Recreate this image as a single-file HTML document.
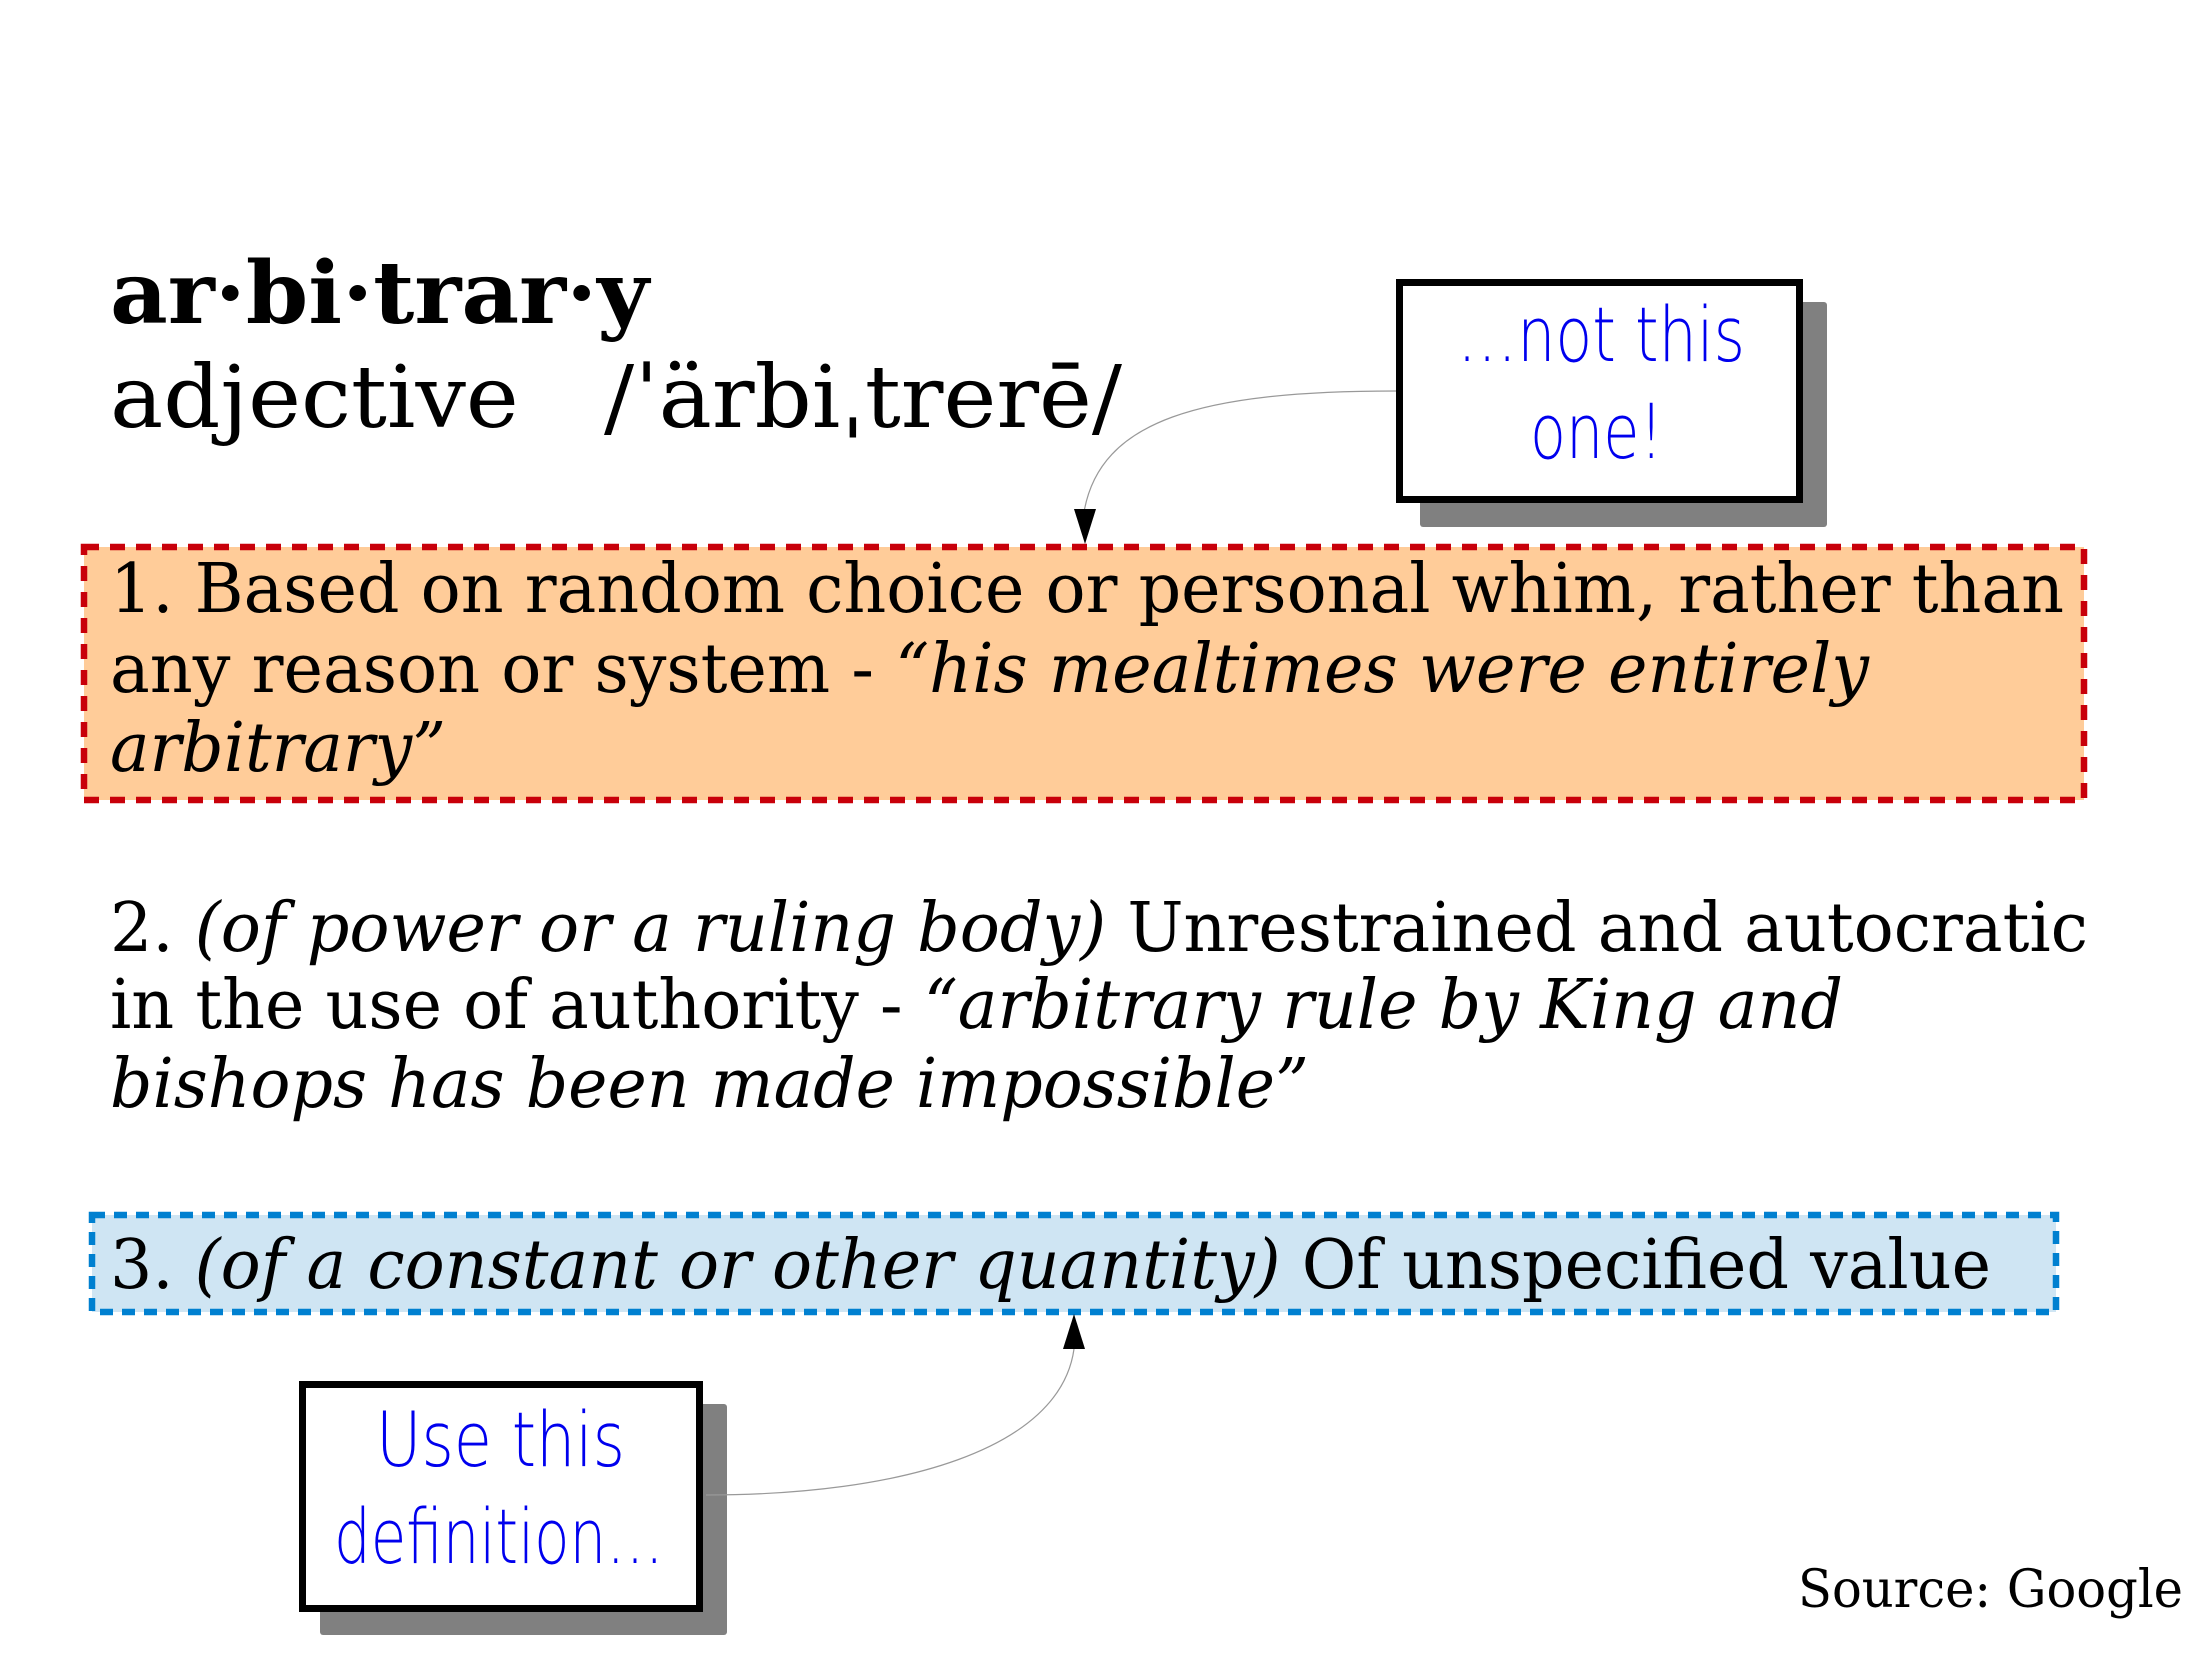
<!DOCTYPE html>
<html><head><meta charset="utf-8"><style>
html,body{margin:0;padding:0;background:#fff;}
svg{display:block;}
.s{font-family:"DejaVu Sans",serif;}
.s{font-family:"DejaVu Serif","Liberation Serif",serif;fill:#000;}
.h{font-family:"DejaVu Sans","Liberation Sans",sans-serif;fill:#0000ee;font-weight:200;}
</style></head><body>
<svg width="2206" height="1653" viewBox="0 0 2206 1653" xmlns="http://www.w3.org/2000/svg">
<rect width="2206" height="1653" fill="#fff"/>
<text class="s" x="110" y="323" font-size="86" font-weight="bold" textLength="539" lengthAdjust="spacingAndGlyphs">ar·bi·trar·y</text>
<text class="s" x="110" y="427" font-size="86" textLength="1012" lengthAdjust="spacingAndGlyphs" xml:space="preserve">adjective   /ˈärbiˌtrerē/</text>

<rect x="1420" y="302" width="407" height="225" rx="3" fill="#808080"/>
<rect x="1399.5" y="282.5" width="400" height="217" fill="#fff" stroke="#000" stroke-width="7"/>
<text class="h" x="1457" y="361" font-size="76" textLength="288" lengthAdjust="spacingAndGlyphs">…not  this</text>
<text class="h" x="1530" y="458" font-size="76" textLength="133" lengthAdjust="spacingAndGlyphs">one!</text>
<path d="M1396,391 C1200,391 1100,420 1084,512" fill="none" stroke="#999" stroke-width="1.2"/>
<path d="M1074,509 L1096,509 L1085,544 Z" fill="#000"/>

<rect x="84" y="547" width="2000" height="253" fill="#ffcc99" stroke="#c8000a" stroke-width="6.5" stroke-dasharray="15 11"/>
<text class="s" x="110" y="612" font-size="68" textLength="1954" lengthAdjust="spacingAndGlyphs">1. Based on random choice or personal whim, rather than</text>
<text class="s" x="110" y="692" font-size="68" textLength="1759" lengthAdjust="spacingAndGlyphs">any reason or system - <tspan font-style="italic">“his mealtimes were entirely</tspan></text>
<text class="s" x="110" y="771" font-size="68" font-style="italic" textLength="336" lengthAdjust="spacingAndGlyphs">arbitrary”</text>

<text class="s" x="110" y="951" font-size="68" textLength="1978" lengthAdjust="spacingAndGlyphs">2. <tspan font-style="italic">(of power or a ruling body)</tspan> Unrestrained and autocratic</text>
<text class="s" x="110" y="1028" font-size="68" textLength="1733" lengthAdjust="spacingAndGlyphs">in the use of authority - <tspan font-style="italic">“arbitrary rule by King and</tspan></text>
<text class="s" x="110" y="1107" font-size="68" font-style="italic" textLength="1199" lengthAdjust="spacingAndGlyphs">bishops has been made impossible”</text>

<rect x="92" y="1215" width="1964" height="97" fill="#cfe5f3" stroke="#0080d0" stroke-width="6.5" stroke-dasharray="13 9"/>
<text class="s" x="110" y="1288" font-size="68" textLength="1881" lengthAdjust="spacingAndGlyphs">3. <tspan font-style="italic">(of a constant or other quantity)</tspan> Of unspecified value</text>

<rect x="320" y="1404" width="407" height="231" rx="3" fill="#808080"/>
<rect x="302.5" y="1384.5" width="397" height="224" fill="#fff" stroke="#000" stroke-width="7"/>
<text class="h" x="376" y="1466" font-size="76" textLength="249" lengthAdjust="spacingAndGlyphs">Use  this</text>
<text class="h" x="334" y="1563" font-size="76" textLength="330" lengthAdjust="spacingAndGlyphs">definition…</text>
<path d="M706,1495 C900,1495 1060,1450 1074,1349" fill="none" stroke="#999" stroke-width="1.2"/>
<path d="M1063,1349 L1085,1349 L1074,1314 Z" fill="#000"/>

<text class="s" x="1798" y="1607" font-size="52" textLength="385" lengthAdjust="spacingAndGlyphs">Source: Google</text>
</svg>
</body></html>
